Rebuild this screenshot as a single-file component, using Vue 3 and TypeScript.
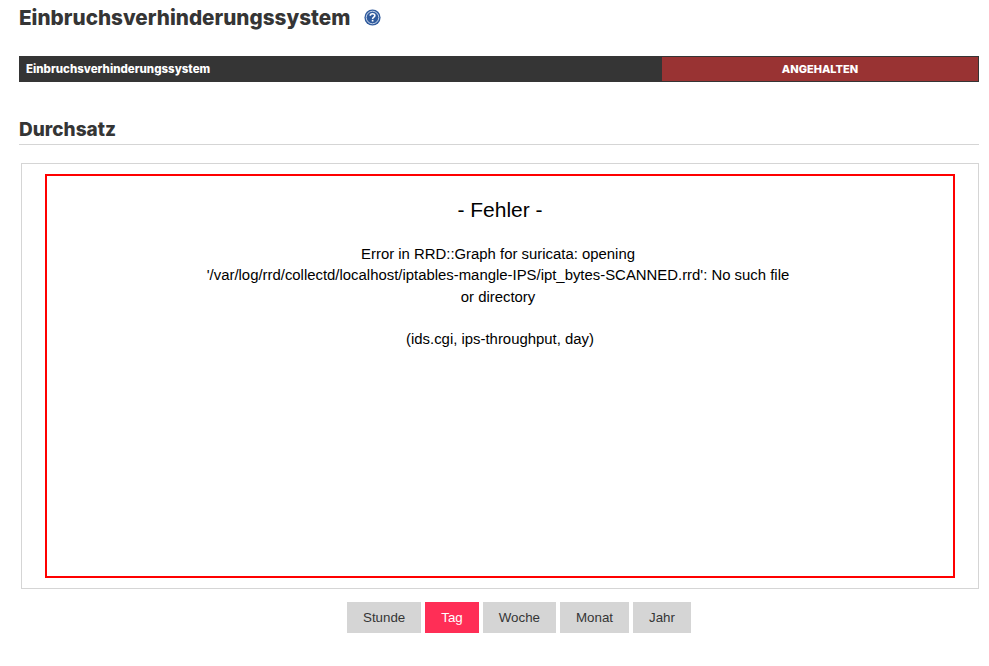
<script setup lang="ts">
const ranges: string[] = ['Stunde', 'Tag', 'Woche', 'Monat', 'Jahr']
const active = 'Tag'
</script>

<template>
  <main class="page">
    <header class="title-row">
      <h1>Einbruchsverhinderungssystem</h1>
      <svg class="help" viewBox="0 0 16 16" width="17" height="17" aria-hidden="true">
        <circle cx="8" cy="8" r="7.6" fill="#2f5a9c" />
        <circle cx="8" cy="8" r="5.9" fill="none" stroke="#c9d6ea" stroke-width="0.9" />
        <path d="M5.9 6.4C5.9 5.2 6.8 4.5 8 4.5S10.2 5.2 10.2 6.3C10.2 7.6 8.1 7.8 8.1 9.3" fill="none" stroke="#fff" stroke-width="1.5" />
        <rect x="7.3" y="10.2" width="1.6" height="1.6" fill="#fff" />
      </svg>
    </header>

    <div class="status">
      <div class="status-name">Einbruchsverhinderungssystem</div>
      <div class="status-state">ANGEHALTEN</div>
    </div>

    <h2>Durchsatz</h2>

    <section class="graph">
      <div class="error">
        <p class="error-title">- Fehler -</p>
        <p class="error-text message">Error in RRD::Graph for suricata: opening<br />'/var/log/rrd/collectd/localhost/iptables-mangle-IPS/ipt_bytes-SCANNED.rrd': No such file<br />or directory</p>
        <p class="error-text">(ids.cgi, ips-throughput, day)</p>
      </div>
    </section>

    <nav class="ranges">
      <button v-for="r in ranges" :key="r" class="range" :class="{ on: r === active }">{{ r }}</button>
    </nav>
  </main>
</template>

<style scoped>
.page { box-sizing: border-box; width: 989px; height: 666px; padding: 0 10px 0 19px; background: #fff; overflow: hidden; font-family: "Liberation Sans", Arial, sans-serif; }
.title-row { display: flex; align-items: center; height: 36px; gap: 14px; }
h1 { margin: 0; font: 800 20.7px/36px Inter, sans-serif; color: #353535; white-space: nowrap; }
.help { flex: none; margin-top: -1px; }
.status { display: flex; height: 26px; margin-top: 20px; background: #353535; }
.status-name { flex: none; width: 636px; padding-left: 7px; font: 800 11.5px/26px Inter, sans-serif; color: #fff; white-space: nowrap; }
.status-state { flex: 1; margin: 1px; margin-left: 0; background: #993333; color: #fff; text-align: center; font: 800 11px/24px Inter, sans-serif; }
h2 { box-sizing: border-box; height: 28px; margin: 35px 0 0; padding-top: 2px; border-bottom: 1px solid #d5d5d5; font: 800 19px/22px Inter, sans-serif; color: #353535; }
.graph { box-sizing: border-box; height: 426px; margin: 18px 0 0 2px; padding: 10px 23px; border: 1px solid #d5d5d5; }
.error { box-sizing: border-box; height: 404px; padding: 22px 100px 0; border: 2px solid #ff0000; text-align: center; color: #000; }
.error p { margin: 0; }
.error-title { font-size: 21px; line-height: 24px; margin-bottom: 22px !important; }
.error-text { font-size: 14.9px; line-height: 21.3px; margin-bottom: 21px !important; }
.message { padding-right: 4px; }
.ranges { display: flex; justify-content: center; gap: 4px; margin: 13px 0 0 2px; padding-left: 38px; }
.range { height: 31px; padding: 0 16px; border: 0; border-radius: 0; background: #d5d5d5; color: #353535; font: 13.333px/31px "Liberation Sans", Arial, sans-serif; }
.range.on { background: #ff2e56; color: #fff; }
</style>
